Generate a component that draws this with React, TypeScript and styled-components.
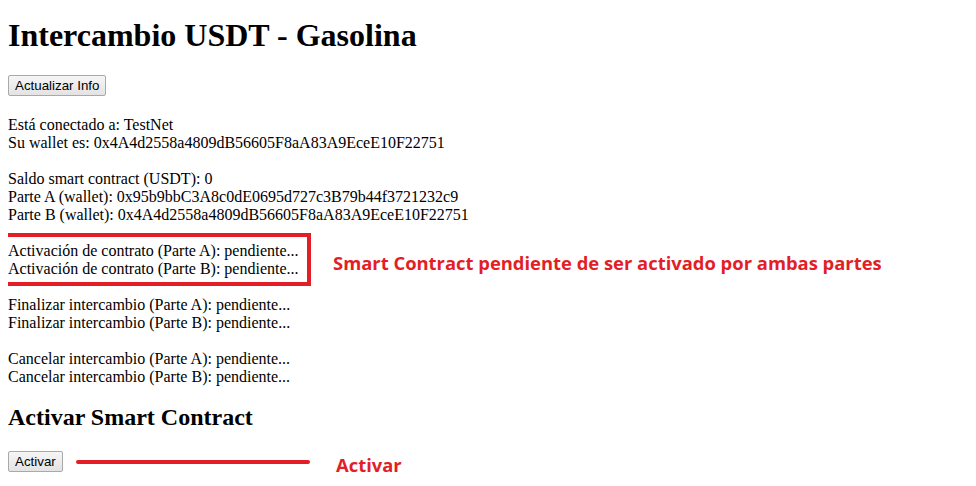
import React from "react";
import styled, { createGlobalStyle } from "styled-components";

const Global = createGlobalStyle`
  html, body { background: #fff; }
  body {
    margin: 8px;
    font-family: "Liberation Serif", "Times New Roman", serif;
    font-size: 16px;
    color: #000;
  }
`;

const Title = styled.h1`
  font-size: 32px;
  font-weight: bold;
  margin: 9px 0 21.44px;
`;

const SubTitle = styled.h2`
  font-size: 24px;
  font-weight: bold;
  margin: 17px 0 19.92px;
`;

const Button = styled.button`
  font-family: "Liberation Sans", Arial, sans-serif;
  font-size: 13.33px;
  color: #000;
  background: linear-gradient(#f6f6f6, #e3e3e3);
  border: 1px solid #a9a9a9;
  border-radius: 2px;
  padding: 1px 6px;
  height: 21px;
  line-height: 17px;
`;

const Group = styled.div<{ $gap?: number }>`
  margin-bottom: ${(p) => p.$gap ?? 18}px;
  line-height: 18px;
`;

const Line = styled.div``;

const Annotated = styled.div`
  position: relative;
`;

const RedBox = styled.div`
  position: absolute;
  left: -7px;
  top: -9px;
  width: 302px;
  height: 45px;
  border: 4px solid #e31e26;
`;

const Note = styled.span<{ $left: number; $top: number }>`
  position: absolute;
  left: ${(p) => p.$left}px;
  top: ${(p) => p.$top}px;
  white-space: nowrap;
  font-family: "Open Sans", "Noto Sans", sans-serif;
  font-weight: 700;
  font-size: 18.4px;
  color: #e31e26;
`;

const ButtonRow = styled.div`
  position: relative;
  display: flex;
  align-items: center;
`;

const RedLine = styled.div`
  position: absolute;
  left: 68px;
  top: 9px;
  width: 234px;
  height: 4px;
  border-radius: 2px;
  background: #e31e26;
`;

export default function App() {
  return (
    <>
      <Global />
      <Title>Intercambio USDT - Gasolina</Title>
      <Group $gap={20}>
        <Button>Actualizar Info</Button>
      </Group>
      <Group>
        <Line>Está conectado a: TestNet</Line>
        <Line>Su wallet es: 0x4A4d2558a4809dB56605F8aA83A9EceE10F22751</Line>
      </Group>
      <Group>
        <Line>Saldo smart contract (USDT): 0</Line>
        <Line>Parte A (wallet): 0x95b9bbC3A8c0dE0695d727c3B79b44f3721232c9</Line>
        <Line>Parte B (wallet): 0x4A4d2558a4809dB56605F8aA83A9EceE10F22751</Line>
      </Group>
      <Group>
        <Annotated>
          <Line>Activación de contrato (Parte A): pendiente...</Line>
          <Line>Activación de contrato (Parte B): pendiente...</Line>
          <RedBox />
          <Note $left={325} $top={12}>
            Smart Contract pendiente de ser activado por ambas partes
          </Note>
        </Annotated>
      </Group>
      <Group>
        <Line>Finalizar intercambio (Parte A): pendiente...</Line>
        <Line>Finalizar intercambio (Parte B): pendiente...</Line>
      </Group>
      <Group>
        <Line>Cancelar intercambio (Parte A): pendiente...</Line>
        <Line>Cancelar intercambio (Parte B): pendiente...</Line>
      </Group>
      <SubTitle>Activar Smart Contract</SubTitle>
      <ButtonRow>
        <Button>Activar</Button>
        <RedLine />
        <Note $left={328} $top={1}>Activar</Note>
      </ButtonRow>
    </>
  );
}
